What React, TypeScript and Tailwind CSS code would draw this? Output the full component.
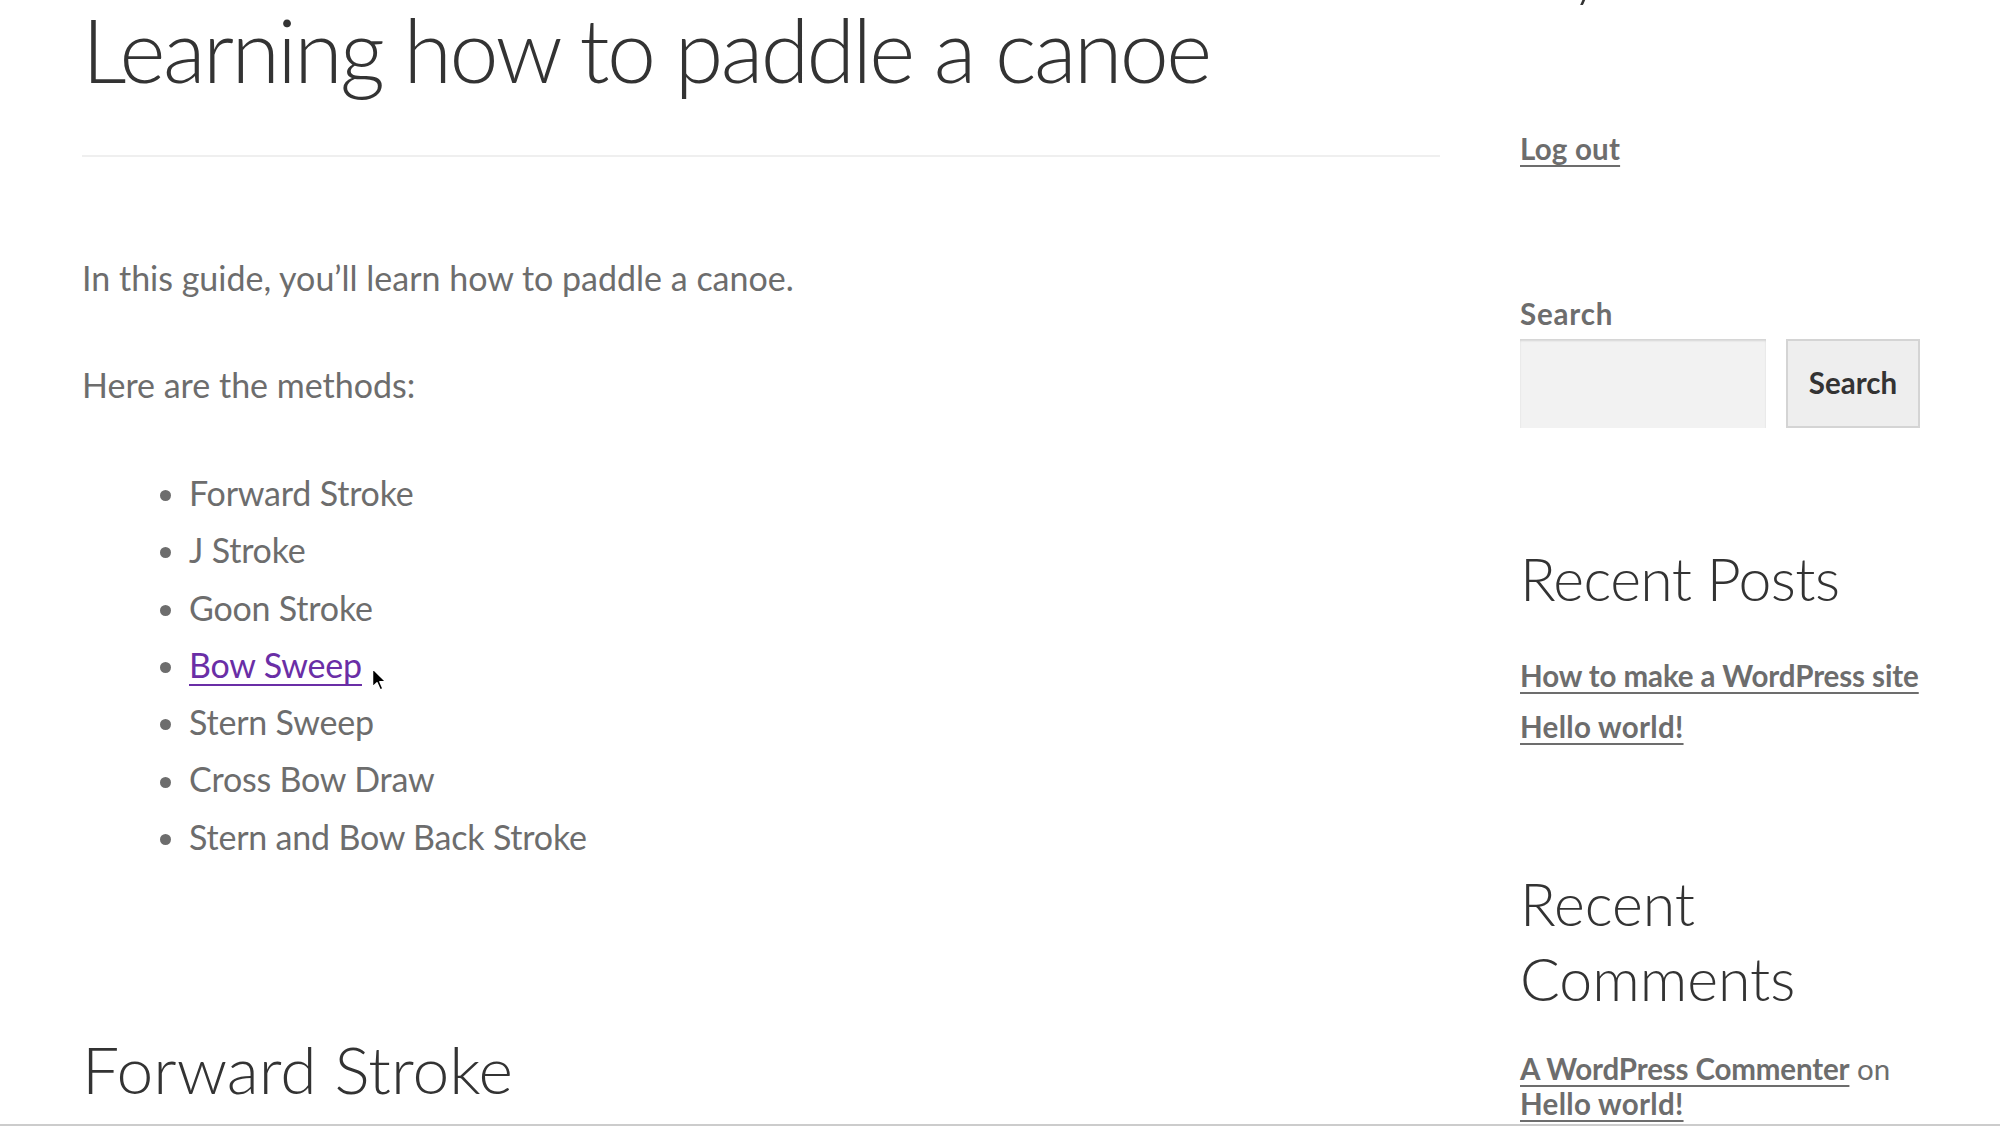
import React from "react";

const items = [
  "Forward Stroke",
  "J Stroke",
  "Goon Stroke",
  "Bow Sweep",
  "Stern Sweep",
  "Cross Bow Draw",
  "Stern and Bow Back Stroke",
];

export default function App() {
  return (
    <div className="relative w-[2000px] h-[1126px] overflow-hidden bg-white font-[family-name:Lato,'Liberation_Sans',sans-serif]">
      <div className="flex pl-[82px]">
        {/* Main column */}
        <main className="w-[1358px] shrink-0">
          <h1 className="text-[88px] leading-[98px] font-light tracking-[-2.6px] text-[#333333] whitespace-nowrap">
            Learning how to paddle a canoe
          </h1>
          <div className="mt-[57px] h-[2px] bg-[#efefef]" />
          <p className="mt-[92px] text-[34px] leading-[57px] text-[#6d6d6d]">
            In this guide, you’ll learn how to paddle a canoe.
          </p>
          <p className="mt-[50px] text-[34px] leading-[57px] text-[#6d6d6d]">
            Here are the methods:
          </p>
          <ul className="mt-[51px] pl-[78px]">
            {items.map((it) => (
              <li
                key={it}
                className="flex items-center gap-[18px] text-[34px] leading-[57.3px] tracking-[-0.2px] text-[#6d6d6d]"
              >
                <span className="mt-[6px] w-[11px] h-[11px] rounded-full bg-[#6d6d6d] shrink-0" />
                {it === "Bow Sweep" ? (
                  <a className="text-[#6a2ea6] underline underline-offset-[6px] decoration-[2px]">
                    {it}
                  </a>
                ) : (
                  <span>{it}</span>
                )}
              </li>
            ))}
          </ul>
          <h2 className="mt-[164px] text-[66px] leading-[80px] font-light text-[#333333]">
            Forward Stroke
          </h2>
        </main>

        {/* Sidebar */}
        <aside className="ml-[80px] w-[400px] shrink-0">
          <h2 className="-mt-[63px] text-[59px] leading-[72px] font-light tracking-[-1px] text-[#333333] whitespace-nowrap">
            My Account
          </h2>
          <a className="block mt-[116px] text-[29.5px] leading-[48px] font-bold tracking-[0.2px] text-[#6d6d6d] underline underline-offset-[5px] decoration-[2px]">
            Log out
          </a>
          <div className="mt-[117px] text-[29.5px] leading-[48px] font-bold tracking-[0.8px] text-[#6d6d6d]">
            Search
          </div>
          <div className="mt-[1px] flex gap-[20px]">
            <div className="w-[246px] h-[89px] bg-[#f2f2f2] shadow-[inset_0_2px_2px_rgba(0,0,0,0.12)]" />
            <button className="w-[134px] h-[89px] bg-[#eeeeee] border-2 border-[#d4d4d4] text-[29.5px] font-bold text-[#333333]">
              Search
            </button>
          </div>
          <h2 className="mt-[115px] text-[59px] leading-[72px] font-light tracking-[-0.6px] text-[#333333] whitespace-nowrap">
            Recent Posts
          </h2>
          <ul className="mt-[35px] text-[29.5px] leading-[51px] font-bold text-[#6d6d6d] whitespace-nowrap">
            <li>
              <a className="underline underline-offset-[5px] decoration-[2px] tracking-[-0.1px]">
                How to make a WordPress site
              </a>
            </li>
            <li>
              <a className="underline underline-offset-[5px] decoration-[2px] tracking-[0.3px]">
                Hello world!
              </a>
            </li>
          </ul>
          <h2 className="mt-[114px] text-[59px] leading-[75px] font-light text-[#333333]">
            Recent
            <br />
            Comments
          </h2>
          <p className="mt-[35px] text-[29.5px] leading-[35px] text-[#6d6d6d] whitespace-nowrap">
            <a className="font-bold underline underline-offset-[5px] decoration-[2px] tracking-[-0.15px]">
              A WordPress Commenter
            </a>{" "}
            on
            <br />
            <a className="font-bold underline underline-offset-[5px] decoration-[2px] tracking-[0.3px]">
              Hello world!
            </a>
          </p>
        </aside>
      </div>

      {/* mouse cursor */}
      <svg
        className="absolute left-[371px] top-[667px]"
        width="18"
        height="26"
        viewBox="0 0 18 26"
      >
        <path
          d="M1.5 1.5 L1.5 20 L6 15.8 L9.2 23 L12 21.8 L8.9 14.8 L14.8 14.8 Z"
          fill="#000"
          stroke="#fff"
          strokeWidth="1.5"
          strokeLinejoin="round"
        />
      </svg>

      {/* window bottom edge */}
      <div className="absolute left-0 right-0 bottom-0 h-[2px] bg-[#cccccc]" />
    </div>
  );
}
